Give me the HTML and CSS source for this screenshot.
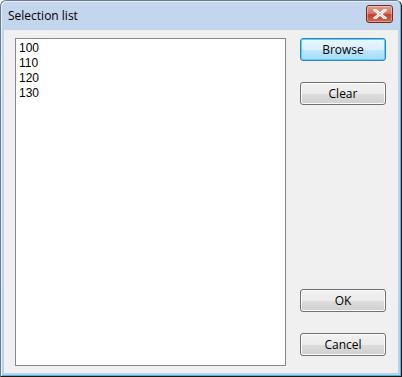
FILE: index.html
```html
<!DOCTYPE html>
<html>
<head>
<meta charset="utf-8">
<link rel="stylesheet" href="styles.css">
</head>
<body>
<div class="window">
  <div class="titlebar">
    <span class="title">Selection list</span>
    <button class="close" aria-label="Close">
      <svg width="14" height="10" viewBox="0 0 14 10"><path d="M2 1 L12 9 M12 1 L2 9" stroke="#fff" stroke-width="3" stroke-linecap="square"/><path d="M2 1 L12 9 M12 1 L2 9" stroke="#8a3a2e" stroke-width="0.6" fill="none" opacity="0.5"/></svg>
    </button>
  </div>
  <div class="client">
    <div class="listbox">
      <div class="item">100</div>
      <div class="item">110</div>
      <div class="item">120</div>
      <div class="item">130</div>
    </div>
    <div class="buttons">
      <div class="group">
        <button class="btn default">Browse</button>
        <button class="btn">Clear</button>
      </div>
      <div class="group">
        <button class="btn">OK</button>
        <button class="btn">Cancel</button>
      </div>
    </div>
  </div>
</div>
</body>
</html>
```
FILE: styles.css
```css
html, body { margin: 0; padding: 0; background: #fff; }
body { font-family: "Liberation Sans", Arial, sans-serif; font-size: 12px; }
.window {
  width: 402px; height: 377px; box-sizing: border-box;
  border: 1px solid #1a1a1a; border-top-color: #6b7c8f; border-left-color: #6b7c8f;
  border-radius: 6px 6px 0 0;
  background: linear-gradient(#c3d6ee, #b9d1ea);
  display: flex; flex-direction: column;
  padding: 0 3px 3px 3px;
  box-shadow: inset 1px 1px 0 #e6eef8, inset -1px -1px 0 #4fb3e3;
}
.titlebar { height: 29px; display: flex; align-items: flex-start; justify-content: space-between; }
.title { margin: 6px 0 0 4px; font-family: "Open Sans", "Liberation Sans", sans-serif; font-size: 12px; color: #000; }
.close {
  margin: 4px 5px 0 0; width: 27px; height: 18px; padding: 0;
  border: 1px solid #6b2d26; border-radius: 3px;
  background: linear-gradient(#e2a08f 0%, #d47865 45%, #c0402b 55%, #cf6b50 100%);
  display: flex; align-items: center; justify-content: center;
  box-shadow: inset 0 0 0 1px rgba(255,255,255,0.35);
}
.client {
  flex: 1; background: #f0f0f0; display: flex;
  padding: 8px 12px 7px 11px;
  gap: 14px;
}
.listbox {
  width: 271px; box-sizing: border-box;
  border: 1px solid #828790; background: #fff;
  padding: 2px 3px;
  font-family: "Liberation Sans", Arial, sans-serif; font-size: 12px; color: #000;
}
.item { height: 15px; line-height: 15px; }
.buttons { flex: 1; display: flex; flex-direction: column; justify-content: space-between; padding-bottom: 10px; }
.group { display: flex; flex-direction: column; gap: 21px; }
.btn {
  width: 86px; height: 23px; padding: 0;
  border: 1px solid #707070; border-radius: 3px;
  background: linear-gradient(#f2f2f2 0%, #ebebeb 50%, #dddddd 51%, #cfcfcf 100%);
  box-shadow: inset 0 0 0 1px #fcfcfc;
  font-family: "Open Sans", "Liberation Sans", sans-serif; font-size: 12px; color: #000;
}
.btn.default {
  border-color: #3c7fb1;
  background: linear-gradient(#eaf6fd 0%, #d9f0fc 50%, #bee6fd 51%, #a7d9f5 100%);
  box-shadow: inset 0 0 0 1px #48d7ff;
}
```
